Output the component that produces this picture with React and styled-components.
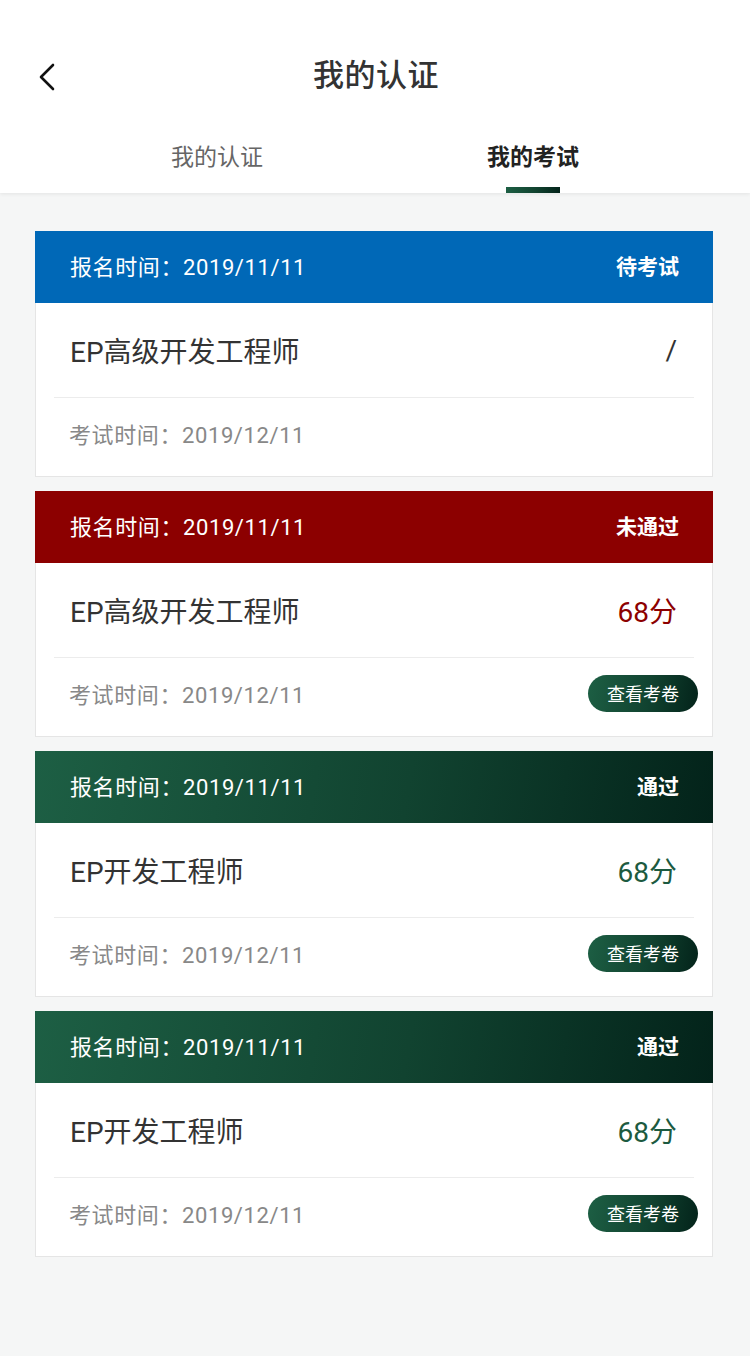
import React from 'react'
import styled, { createGlobalStyle } from 'styled-components'

const GlobalStyle = createGlobalStyle`
  html, body {
    margin: 0;
    padding: 0;
    background: #f5f6f6;
    font-family: Roboto, "Noto Sans CJK SC", sans-serif;
  }
`

const GREEN = 'linear-gradient(100deg, #1d5f44 0%, #114330 55%, #03231a 100%)'

const exams = [
  { date: '2019/11/11', status: '待考试', title: 'EP高级开发工程师', score: '/', examDate: '2019/12/11', kind: 'pending' },
  { date: '2019/11/11', status: '未通过', title: 'EP高级开发工程师', score: '68分', examDate: '2019/12/11', kind: 'fail' },
  { date: '2019/11/11', status: '通过', title: 'EP开发工程师', score: '68分', examDate: '2019/12/11', kind: 'pass' },
  { date: '2019/11/11', status: '通过', title: 'EP开发工程师', score: '68分', examDate: '2019/12/11', kind: 'pass' },
]

const headerBg = {
  pending: '#0068b7',
  fail: '#8c0000',
  pass: GREEN,
}

const scoreColor = {
  pending: '#333333',
  fail: '#8c0000',
  pass: '#1c5a40',
}

const App = () => {
  return (
    <Page>
      <GlobalStyle />
      <Top>
        <NavBar>
          <BackButton>
            <svg width="20" height="28" viewBox="0 0 20 28">
              <path d="M16 2 L4 14 L16 26" fill="none" stroke="#111" strokeWidth="2.6" strokeLinecap="round" strokeLinejoin="round" />
            </svg>
          </BackButton>
          <Title>我的认证</Title>
        </NavBar>
        <Tabs>
          <Tab>
            <TabLabel>我的认证</TabLabel>
          </Tab>
          <Tab>
            <TabLabel active>我的考试</TabLabel>
            <Indicator />
          </Tab>
        </Tabs>
      </Top>
      <List>
        {exams.map((e, i) => (
          <Card key={i}>
            <CardHeader kind={e.kind}>
              <DateText>报名时间：{e.date}</DateText>
              <Status>{e.status}</Status>
            </CardHeader>
            <CardBody>
              <TitleRow>
                <ExamName>{e.title}</ExamName>
                <Score kind={e.kind}>{e.score}</Score>
              </TitleRow>
              <FootRow>
                <ExamTime>考试时间：{e.examDate}</ExamTime>
                {e.kind !== 'pending' && <ViewButton>查看考卷</ViewButton>}
              </FootRow>
            </CardBody>
          </Card>
        ))}
      </List>
    </Page>
  )
}

export default App

const Page = styled.div`
  min-height: 1356px;
  background: #f5f6f6;
`

const Top = styled.div`
  background: #fff;
  box-shadow: 0 1px 4px rgba(0, 0, 0, 0.08);
  position: relative;
`

const NavBar = styled.div`
  height: 120px;
  display: flex;
  align-items: flex-start;
  justify-content: center;
  padding-top: 56px;
  box-sizing: border-box;
  position: relative;
`

const BackButton = styled.div`
  position: absolute;
  left: 37px;
  top: 63px;
  width: 20px;
  height: 28px;
`

const Title = styled.div`
  font-size: 31px;
  line-height: 40px;
  font-weight: 500;
  color: #333;
  letter-spacing: 0.5px;
  margin-left: 2px;
`

const Tabs = styled.div`
  height: 73px;
  display: grid;
  grid-template-columns: 1fr 1fr;
  padding: 0 59px;
`

const Tab = styled.div`
  display: flex;
  flex-direction: column;
  align-items: center;
  padding-top: 22px;
  box-sizing: border-box;
`

const TabLabel = styled.div`
  font-size: 23px;
  line-height: 32px;
  color: ${p => (p.active ? '#222' : '#666')};
  font-weight: ${p => (p.active ? 600 : 400)};
`

const Indicator = styled.div`
  margin-top: auto;
  width: 54px;
  height: 6px;
  background: ${GREEN};
`

const List = styled.div`
  padding: 38px 37px 60px 35px;
  display: flex;
  flex-direction: column;
  gap: 14px;
`

const Card = styled.div`
  background: #fff;
`

const CardHeader = styled.div`
  height: 72px;
  padding: 0 34px 4px 35px;
  box-sizing: border-box;
  display: flex;
  align-items: center;
  justify-content: space-between;
  background: ${p => headerBg[p.kind]};
  color: #fff;
`

const DateText = styled.span`
  font-size: 22px;
  letter-spacing: 0.6px;
`

const Status = styled.span`
  font-weight: 600;
  font-size: 21px;
`

const CardBody = styled.div`
  border: 1px solid #e5e5e5;
  border-top: none;
  padding: 0 18px;
`

const TitleRow = styled.div`
  height: 94px;
  display: flex;
  align-items: center;
  justify-content: space-between;
  padding: 0 17px 0 16px;
  border-bottom: 1px solid #ececec;
`

const ExamName = styled.span`
  font-size: 28px;
  color: #333;
`

const Score = styled.span`
  font-size: 28px;
  color: ${p => scoreColor[p.kind]};
`

const FootRow = styled.div`
  height: 78px;
  display: flex;
  align-items: center;
  justify-content: space-between;
  padding: 0 0 8px 15px;
  box-sizing: border-box;
  margin-right: -4px;
`

const ExamTime = styled.span`
  font-size: 22px;
  letter-spacing: 0.6px;
  color: #888;
`

const ViewButton = styled.button`
  width: 110px;
  height: 37px;
  border: none;
  border-radius: 19px;
  background: ${GREEN};
  color: #fff;
  font-family: inherit;
  font-size: 18px;
  padding: 0;
  cursor: pointer;
`
